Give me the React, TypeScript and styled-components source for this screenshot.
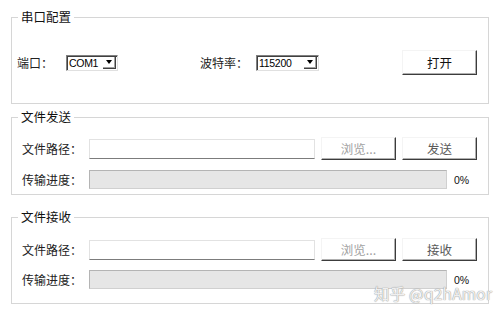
import React from "react";
import styled, { createGlobalStyle } from "styled-components";

const GlobalStyle = createGlobalStyle`
  html, body {
    margin: 0;
    padding: 0;
    background: #ffffff;
  }
  body {
    font-family: "Noto Sans CJK SC", "Liberation Sans", sans-serif;
    font-size: 12px;
    color: #222;
  }
`;

type Pad = { $top: number; $bottom: number; $gap: number };

const Page = styled.div`
  position: relative;
  width: 500px;
  height: 316px;
  overflow: hidden;
  padding: 9px 0 0 11px;
  box-sizing: border-box;
`;

const Group = styled.fieldset<Pad & { $mt: number }>`
  margin: ${(p) => p.$mt}px 0 0 0;
  width: 478px;
  box-sizing: border-box;
  border: 1px solid #d6d6d6;
  padding: ${(p) => p.$top}px 11px ${(p) => p.$bottom}px 5px;
  display: flex;
  flex-direction: column;
  gap: ${(p) => p.$gap}px;
`;

const Legend = styled.legend`
  margin-left: 1px;
  padding: 0 3px;
  font-size: 12.5px;
  line-height: 16px;
  color: #111;
`;

const Row = styled.div<{ $indent?: number }>`
  display: flex;
  align-items: center;
  padding-left: ${(p) => p.$indent ?? 0}px;
`;

const Label = styled.span<{ $w: number }>`
  width: ${(p) => p.$w}px;
  flex: none;
  font-size: 12px;
  line-height: 16px;
  color: #222;
`;

const Combo = styled.div<{ $w: number }>`
  width: ${(p) => p.$w}px;
  height: 16px;
  box-sizing: border-box;
  border-top: 1px solid #808080;
  border-left: 1px solid #808080;
  border-right: 1px solid #e0e0e0;
  border-bottom: 1px solid #e0e0e0;
  box-shadow: inset 1px 1px 0 #404040;
  background: #fff;
  display: flex;
  align-items: stretch;
  flex: none;
`;

const ComboText = styled.span`
  flex: 1;
  padding-left: 2px;
  font-family: "Liberation Sans", sans-serif;
  font-size: 10.5px;
  line-height: 14px;
  color: #000;
  letter-spacing: -0.3px;
`;

const ComboArrow = styled.span`
  width: 13px;
  margin: 1px 1px 1px 0;
  box-sizing: border-box;
  border-right: 1px solid #404040;
  border-bottom: 1px solid #404040;
  box-shadow: inset -1px -1px 0 #a0a0a0;
  background: #fff;
  display: flex;
  align-items: center;
  justify-content: center;
  &::after {
    content: "";
    border-left: 3.5px solid transparent;
    border-right: 3.5px solid transparent;
    border-top: 4px solid #000;
  }
`;

const Spacer = styled.div<{ $w: number }>`
  width: ${(p) => p.$w}px;
  flex: none;
`;

const Button = styled.button<{ $muted?: "weak" | "strong"; $h: number }>`
  width: 75px;
  height: ${(p) => p.$h}px;
  flex: none;
  box-sizing: border-box;
  background: #fff;
  border-top: 1px solid #f4f4f4;
  border-left: 1px solid #f4f4f4;
  border-right: 1px solid #3c3c3c;
  border-bottom: 1px solid #3c3c3c;
  box-shadow: inset -1px -1px 0 #b0b0b0;
  padding: 0;
  font-family: "Noto Sans CJK SC", sans-serif;
  font-size: 12.5px;
  color: ${(p) =>
    p.$muted === "weak" ? "#a2a2a2" : p.$muted === "strong" ? "#5a5a5a" : "#111"};
`;

const PathInput = styled.div`
  width: 226px;
  height: 20px;
  flex: none;
  box-sizing: border-box;
  border: 1px solid #e2e2e2;
  border-bottom: 1px solid #7c7c7c;
  background: #fff;
`;

const Progress = styled.div`
  width: 358px;
  height: 19px;
  flex: none;
  box-sizing: border-box;
  border: 1px solid #b4b4b4;
  border-right-color: #d0d0d0;
  border-bottom-color: #d0d0d0;
  background: #e6e6e6;
`;

const Percent = styled.span`
  margin-left: 7px;
  font-family: "Liberation Sans", sans-serif;
  font-size: 10.5px;
  color: #111;
`;

const Watermark = styled.div`
  position: absolute;
  left: 374px;
  top: 284px;
  white-space: nowrap;
  font-family: "Noto Sans CJK SC", "Liberation Sans", sans-serif;
  font-size: 15.5px;
  line-height: 18px;
  color: rgba(255, 255, 255, 0.85);
  text-shadow: 0 0 1px #9a9a9a, 0 0 1px #9a9a9a;
  letter-spacing: 0.2px;
`;

const FileGroup: React.FC<{
  title: string;
  action: string;
  mt: number;
  top: number;
  bottom: number;
  gap: number;
}> = ({ title, action, mt, top, bottom, gap }) => (
  <Group $mt={mt} $top={top} $bottom={bottom} $gap={gap}>
    <Legend>{title}</Legend>
    <Row $indent={5}>
      <Label $w={67}>文件路径：</Label>
      <PathInput />
      <Spacer $w={6} />
      <Button $muted="weak" $h={23}>浏览...</Button>
      <Spacer $w={6} />
      <Button $muted="strong" $h={23}>{action}</Button>
    </Row>
    <Row $indent={5}>
      <Label $w={67}>传输进度：</Label>
      <Progress />
      <Percent>0%</Percent>
    </Row>
  </Group>
);

export default function App() {
  return (
    <Page>
      <GlobalStyle />
      <Group $mt={0} $top={25} $bottom={28} $gap={0}>
        <Legend>串口配置</Legend>
        <Row>
          <Label $w={49}>端口：</Label>
          <Combo $w={52}>
            <ComboText>COM1</ComboText>
            <ComboArrow />
          </Combo>
          <Spacer $w={82} />
          <Label $w={56}>波特率：</Label>
          <Combo $w={63}>
            <ComboText>115200</ComboText>
            <ComboArrow />
          </Combo>
          <Spacer $w={83} />
          <Button $h={25}>打开</Button>
        </Row>
      </Group>
      <FileGroup title="文件发送" action="发送" mt={5} top={12} bottom={5} gap={10} />
      <FileGroup title="文件接收" action="接收" mt={14} top={13} bottom={14} gap={9} />
      <Watermark>知乎 @q2hAmor</Watermark>
    </Page>
  );
}
